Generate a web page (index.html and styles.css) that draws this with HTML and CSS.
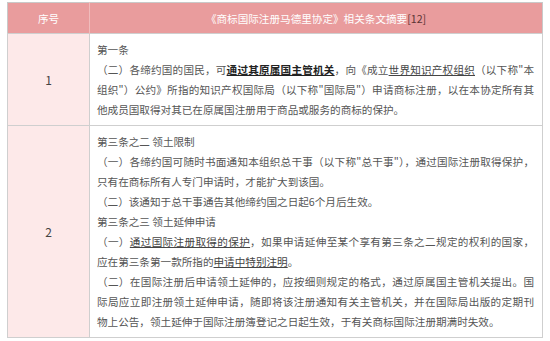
FILE: index.html
```html
<!DOCTYPE html>
<html lang="zh-CN">
<head>
    <meta charset="UTF-8">
    <title>马德里协定相关条文摘要</title>
    <link rel="stylesheet" href="styles.css">
</head>
<body>
    <table class="law-table">
        <thead>
            <tr>
                <th class="col-no">序号</th>
                <th>《商标国际注册马德里协定》相关条文摘要<span class="ref">[12]</span></th>
            </tr>
        </thead>
        <tbody>
            <tr>
                <td class="col-no">1</td>
                <td class="text">
                    <p>第一条</p>
                    <p>（二）各缔约国的国民，可<b class="em">通过其原属国主管机关</b>，向《成立<u>世界知识产权组织</u>（以下称"本组织"）公约》所指的知识产权国际局（以下称"国际局"）申请商标注册，以在本协定所有其他成员国取得对其已在原属国注册用于商品或服务的商标的保护。</p>
                </td>
            </tr>
            <tr>
                <td class="col-no">2</td>
                <td class="text">
                    <p>第三条之二 领土限制</p>
                    <p>（一）各缔约国可随时书面通知本组织总干事（以下称"总干事"），通过国际注册取得保护，只有在商标所有人专门申请时，才能扩大到该国。</p>
                    <p>（二）该通知于总干事通告其他缔约国之日起6个月后生效。</p>
                    <p>第三条之三 领土延伸申请</p>
                    <p><span class="line">（一）<u>通过国际注册取得的保护</u>，如果申请延伸至某个享有第三条之二规定的权利的国家，</span>应在第三条第一款所指的<u>申请中特别注明</u>。</p>
                    <p><span class="line">（二）在国际注册后申请领土延伸的，应按细则规定的格式，通过原属国主管机关提出。国</span><span class="line">际局应立即注册领土延伸申请，随即将该注册通知有关主管机关，并在国际局出版的定期刊</span>物上公告，领土延伸于国际注册簿登记之日起生效，于有关商标国际注册期满时失效。</p>
                </td>
            </tr>
        </tbody>
    </table>
</body>
</html>
```
FILE: styles.css
```css
body {
    margin: 0;
    padding: 2px 7px 4px 7px;
    background-color: #fff;
    font-family: "Noto Sans CJK SC", "Noto Sans", sans-serif;
    font-size: 10.6px;
    color: #555;
}
.law-table {
    width: 536px;
    border-collapse: collapse;
    border: 1px solid #c9c9c9;
}
.law-table th {
    background-color: #e99c9d;
    color: #fff;
    font-weight: normal;
    height: 30px;
    padding: 0;
    border-left: 1px solid #f0bcbc;
}
.law-table th.col-no {
    border-left: none;
}
.ref {
    color: #5b3434;
}
.law-table td {
    border: 1px solid #cfcfcf;
    vertical-align: middle;
}
.law-table td.col-no {
    width: 79px;
    background-color: #fde9e9;
    text-align: center;
    color: #444;
    font-size: 12px;
}
.law-table td.text {
    padding: 6px 8px 5px 7px;
    line-height: 20px;
    text-align: justify;
}
.text p {
    margin: 0;
}
.text .line {
    display: block;
    text-align-last: justify;
}
.text .em {
    color: #222;
    text-decoration: underline;
}
.text u {
    color: #444;
}
```
